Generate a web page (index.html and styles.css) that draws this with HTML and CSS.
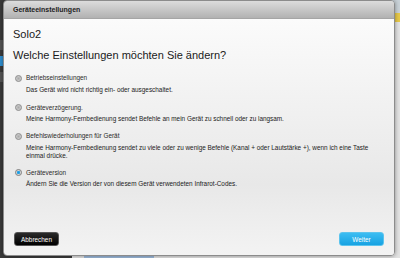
FILE: index.html
```html
<!DOCTYPE html>
<html lang="de">
<head>
  <meta charset="UTF-8" />
  <title>Geräteeinstellungen</title>
  <link rel="stylesheet" href="styles.css">
</head>
<body>

  <!-- page behind the dialog -->
  <div class="backdrop">
    <div class="side">
      <div class="side-item"></div>
      <div class="side-item active"></div>
      <div class="side-item"></div>
    </div>
    <div class="main">
      <div class="topbar"></div>
      <div class="notice"></div>
      <div class="link"></div>
    </div>
  </div>

  <!-- dialog -->
  <div class="dialog">
    <div class="dialog-title">Geräteeinstellungen</div>
    <div class="dialog-body">
      <div class="device">Solo2</div>
      <div class="question">Welche Einstellungen möchten Sie ändern?</div>

      <div class="options">
        <div class="option">
          <div class="option-label"><span class="radio"></span>Betriebseinstellungen</div>
          <div class="option-desc">Das Gerät wird nicht richtig ein- oder ausgeschaltet.</div>
        </div>
        <div class="option">
          <div class="option-label"><span class="radio"></span>Geräteverzögerung.</div>
          <div class="option-desc">Meine Harmony-Fernbedienung sendet Befehle an mein Gerät zu schnell oder zu langsam.</div>
        </div>
        <div class="option">
          <div class="option-label"><span class="radio"></span>Befehlswiederholungen für Gerät</div>
          <div class="option-desc">Meine Harmony-Fernbedienung sendet zu viele oder zu wenige Befehle (Kanal + oder Lautstärke +), wenn ich eine Taste einmal drücke.</div>
        </div>
        <div class="option">
          <div class="option-label"><span class="radio checked"></span>Geräteversion</div>
          <div class="option-desc">Ändern Sie die Version der von diesem Gerät verwendeten Infrarot-Codes.</div>
        </div>
      </div>

      <div class="buttons">
        <button class="btn cancel">Abbrechen</button>
        <button class="btn next">Weiter</button>
      </div>
    </div>
  </div>

</body>
</html>
```

FILE: styles.css
```css
body {
  margin: 0;
  width: 400px;
  height: 258px;
  overflow: hidden;
  position: relative;
  font-family: 'Liberation Sans', Arial, sans-serif;
  color: #222;
}

/* background page */
.backdrop {
  display: flex;
  height: 258px;
}

.side {
  width: 72px;
  background: #3a3a3a;
  padding-top: 40px;
  box-sizing: border-box;
}

.side-item {
  height: 10px;
  margin-bottom: 6px;
  background: #555;
}

.side-item.active {
  background: #2f8fd0;
}

.main {
  flex: 1;
  background: #e2e2e2;
}

.topbar {
  height: 13px;
  background: #c9d2d8;
}

.notice {
  height: 9px;
  background: #e6c84a;
}

.link {
  margin: 234px 0 0 12px;
  width: 70px;
  height: 2px;
  background: #9bb8da;
}

/* dialog */
.dialog {
  position: absolute;
  left: 3px;
  top: 0;
  width: 392px;
  height: 256px;
  box-sizing: border-box;
  border: 1px solid #8c8c8c;
  border-radius: 4px;
  overflow: hidden;
  display: flex;
  flex-direction: column;
  box-shadow: 0 0 4px rgba(0,0,0,0.4);
}

.dialog-title {
  height: 17px;
  line-height: 17px;
  padding-left: 9px;
  font-size: 7px;
  font-weight: bold;
  color: #222;
  background: linear-gradient(#dcdcdc, #b2b2b2);
  border-bottom: 1px solid #a5a5a5;
  flex-shrink: 0;
}

.dialog-body {
  flex: 1;
  display: flex;
  flex-direction: column;
  padding: 9px 9px 9px;
  background: linear-gradient(#fbfbfb 0%, #ececec 55%, #e8e8e8 70%, #f3f3f3 100%);
}

.device {
  font-size: 11px;
  line-height: 13px;
  color: #1a1a1a;
}

.question {
  margin-top: 8px;
  font-size: 11px;
  line-height: 13px;
  color: #1a1a1a;
}

.options {
  margin-top: 12px;
  display: flex;
  flex-direction: column;
  gap: 9px;
}

.option:first-child {
  margin-bottom: 1px;
}

.option-label {
  display: flex;
  align-items: center;
  font-size: 6.4px;
  line-height: 8px;
  color: #2a2a2a;
}

.radio {
  width: 7px;
  height: 7px;
  margin: 0 4px 0 2px;
  border-radius: 50%;
  box-sizing: border-box;
  border: 1px solid #8a8a8a;
  background: radial-gradient(circle, #a9a9a9 0%, #c4c4c4 55%, #e0e0e0 100%);
}

.radio.checked {
  border-color: #7c7c7c;
  background: radial-gradient(circle, #1a94dc 0, #2aa7ea 38%, #cfcfcf 50%, #ececec 100%);
}

.option-desc {
  margin-top: 3.5px;
  padding-left: 13px;
  padding-right: 16px;
  font-size: 6.4px;
  line-height: 8px;
  color: #222;
}

.buttons {
  margin-top: auto;
  display: flex;
  justify-content: space-between;
  padding: 0 0 0 1px;
}

.btn {
  width: 45px;
  height: 14px;
  padding: 0;
  border-radius: 3px;
  font-family: inherit;
  font-size: 6.4px;
  color: #fff;
  cursor: pointer;
}

.btn.cancel {
  background: linear-gradient(#2a2a2a, #000);
  border: 1px solid #555;
}

.btn.next {
  margin-right: 1px;
  background: linear-gradient(#3cbdf2, #17a2e2);
  border: 1px solid #5cc4ee;
}
```
